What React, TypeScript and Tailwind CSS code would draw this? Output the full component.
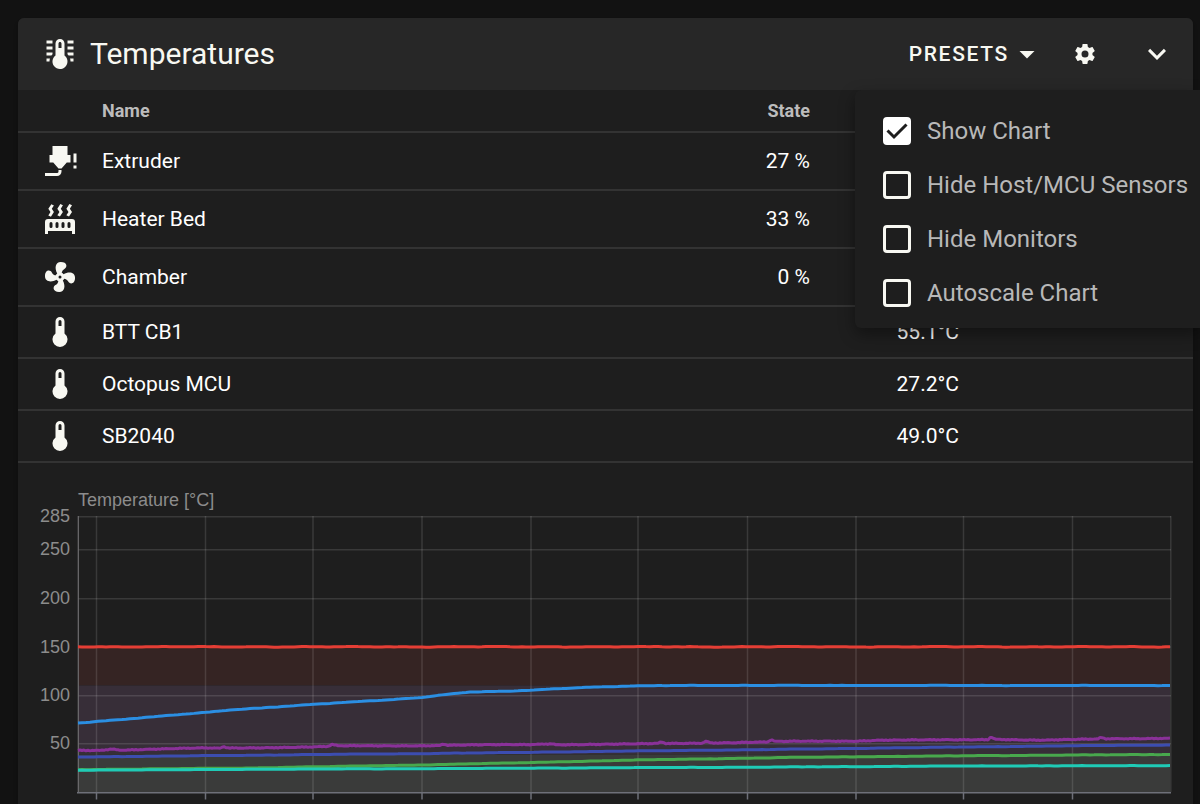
import type { ReactNode } from "react";

const ICONS = {
  lines:
    "M17 3H21V5H17V3M17 7H21V9H17V7M17 11H21V13H17.75L17 12.1V11M21 15V17H19C19 16.31 18.9 15.63 18.71 15H21M7 3V5H3V3H7M7 7V9H3V7H7M7 11V12.1L6.25 13H3V11H7M3 15H5.29C5.1 15.63 5 16.31 5 17H3V15M15 13V5C15 3.34 13.66 2 12 2S9 3.34 9 5V13C6.79 14.66 6.34 17.79 8 20S12.79 22.66 15 21 17.66 16.21 16 14C15.72 13.62 15.38 13.28 15 13M12 4C12.55 4 13 4.45 13 5V8H11V5C11 4.45 11.45 4 12 4Z",
  nozzle:
    "M7 2H17V8H19V13H16.5L13 17H11L7.5 13H5V8H7V2M10 22H2V20H10A1 1 0 0 0 11 19V18H13V19A3 3 0 0 1 10 22M21 7H23V13H21V7M21 15H23V17H21V15Z",
  radiator:
    "M7.95,3L6.53,5.19L7.95,7.4H7.94L5.95,10.5L4.22,9.6L5.64,7.39L4.22,5.19L6.22,2.09L7.95,3M13.95,2.89L12.53,5.1L13.95,7.3L13.94,7.31L11.95,10.4L10.22,9.5L11.64,7.3L10.22,5.1L12.22,2L13.95,2.89M20,2.89L18.56,5.1L20,7.3V7.31L18,10.4L16.25,9.5L17.67,7.3L16.25,5.1L18.25,2L20,2.89M2,22V14A2,2 0 0,1 4,12H20A2,2 0 0,1 22,14V22H20V20H4V22H2M6,14A1,1 0 0,0 5,15V17A1,1 0 0,0 6,18A1,1 0 0,0 7,17V15A1,1 0 0,0 6,14M10,14A1,1 0 0,0 9,15V17A1,1 0 0,0 10,18A1,1 0 0,0 11,17V15A1,1 0 0,0 10,14M14,14A1,1 0 0,0 13,15V17A1,1 0 0,0 14,18A1,1 0 0,0 15,17V15A1,1 0 0,0 14,14M18,14A1,1 0 0,0 17,15V17A1,1 0 0,0 18,18A1,1 0 0,0 19,17V15A1,1 0 0,0 18,14Z",
  fan: "M12,11A1,1 0 0,0 11,12A1,1 0 0,0 12,13A1,1 0 0,0 13,12A1,1 0 0,0 12,11M12.5,2C17,2 17.11,5.57 14.75,6.75C13.76,7.24 13.32,8.29 13.13,9.22C13.61,9.42 14.03,9.73 14.35,10.13C18.05,8.13 22.03,8.92 22.03,12.5C22.03,17 18.46,17.1 17.28,14.73C16.78,13.74 15.72,13.3 14.79,13.11C14.59,13.59 14.28,14 13.88,14.34C15.87,18.03 15.08,22 11.5,22C7,22 6.91,18.42 9.27,17.24C10.25,16.75 10.69,15.71 10.89,14.79C10.4,14.59 9.97,14.27 9.65,13.87C5.96,15.85 2,15.07 2,11.5C2,7 5.56,6.89 6.74,9.26C7.24,10.25 8.29,10.68 9.22,10.87C9.41,10.39 9.73,9.97 10.14,9.65C8.15,5.96 8.94,2 12.5,2Z",
  thermometer:
    "M15 13V5A3 3 0 0 0 9 5V13A5 5 0 1 0 15 13M12 4A1 1 0 0 1 13 5V8H11V5A1 1 0 0 1 12 4Z",
  menuDown: "M7,10L12,15L17,10H7Z",
  chevron: "M7.41,8.58L12,13.17L16.59,8.58L18,10L12,16L6,10L7.41,8.58Z",
  cog: "M12,15.5A3.5,3.5 0 0,1 8.5,12A3.5,3.5 0 0,1 12,8.5A3.5,3.5 0 0,1 15.5,12A3.5,3.5 0 0,1 12,15.5M19.43,12.97C19.47,12.65 19.5,12.33 19.5,12C19.5,11.67 19.47,11.34 19.43,11L21.54,9.37C21.73,9.22 21.78,8.95 21.66,8.73L19.66,5.27C19.54,5.05 19.27,4.96 19.05,5.05L16.56,6.05C16.04,5.66 15.5,5.32 14.87,5.07L14.5,2.42C14.46,2.18 14.25,2 14,2H10C9.75,2 9.54,2.18 9.5,2.42L9.13,5.07C8.5,5.32 7.96,5.66 7.44,6.05L4.95,5.05C4.73,4.96 4.46,5.05 4.34,5.27L2.34,8.73C2.21,8.95 2.27,9.22 2.46,9.37L4.57,11C4.53,11.34 4.5,11.67 4.5,12C4.5,12.33 4.53,12.65 4.57,12.97L2.46,14.63C2.27,14.78 2.21,15.05 2.34,15.27L4.34,18.73C4.46,18.95 4.73,19.03 4.95,18.95L7.44,17.94C7.96,18.34 8.5,18.68 9.13,18.93L9.5,21.58C9.54,21.82 9.75,22 10,22H14C14.25,22 14.46,21.82 14.5,21.58L14.87,18.93C15.5,18.67 16.04,18.34 16.56,17.94L19.05,18.95C19.27,19.03 19.54,18.95 19.66,18.73L21.66,15.27C21.78,15.05 21.73,14.78 21.54,14.63L19.43,12.97Z",
};

function Icon({ name, className = "size-9" }: { name: keyof typeof ICONS; className?: string }) {
  return (
    <svg viewBox="0 0 24 24" className={`block shrink-0 fill-[#f8f8f2] ${className}`} aria-hidden="true">
      <path d={ICONS[name]} />
    </svg>
  );
}

type Sensor = { icon: keyof typeof ICONS; name: string; state?: string; temp?: string; tall?: boolean };

const SENSORS: Sensor[] = [
  { icon: "nozzle", name: "Extruder", state: "27 %", tall: true },
  { icon: "radiator", name: "Heater Bed", state: "33 %", tall: true },
  { icon: "fan", name: "Chamber", state: "0 %", tall: true },
  { icon: "thermometer", name: "BTT CB1", temp: "55.1°C" },
  { icon: "thermometer", name: "Octopus MCU", temp: "27.2°C" },
  { icon: "thermometer", name: "SB2040", temp: "49.0°C" },
];

const OPTIONS = [
  { label: "Show Chart", checked: true },
  { label: "Hide Host/MCU Sensors", checked: false },
  { label: "Hide Monitors", checked: false },
  { label: "Autoscale Chart", checked: false },
];

type Point = [number, number];

// Linear interpolation through the sampled points, with sensor jitter on top.
function trace(points: Point[], jitter: number, step: number): string {
  const out: string[] = [];
  let seg = 0;
  for (let x = points[0][0]; x <= points[points.length - 1][0]; x += step) {
    while (seg < points.length - 2 && x > points[seg + 1][0]) seg++;
    const [x0, y0] = points[seg];
    const [x1, y1] = points[seg + 1];
    const noise = jitter * (Math.sin(x * 1.7) * 0.5 + Math.sin(x * 0.37) * 0.3 + Math.sin(x * 3.1) * 0.4);
    out.push(`${x},${(y0 + ((y1 - y0) * (x - x0)) / (x1 - x0) + noise).toFixed(2)}`);
  }
  return out.join(" ");
}

const SERIES: { color: string; points: Point[]; jitter: number; step: number }[] = [
  { color: "#2b8fe3", jitter: 0.15, step: 4, points: [[78, 723], [205, 712.5], [230, 710], [312, 704.5], [400, 699], [421, 697.5], [445, 694.5], [470, 692], [510, 691.2], [580, 687.5], [638, 685.9], [680, 685.4], [1170, 685.5]] },
  { color: "#e53e35", jitter: 0.35, step: 4, points: [[78, 646.8], [1170, 646.8]] },
  { color: "#48a84d", jitter: 0.15, step: 4, points: [[78, 769.6], [250, 768], [312, 766.8], [421, 765], [530, 762.5], [638, 760], [747, 758.2], [800, 757.3], [963, 755.8], [1170, 754.4]] },
  { color: "#8a3199", jitter: 0.6, step: 2, points: [[78, 750.4], [100, 750.2], [112, 748.8], [120, 750], [205, 748], [220, 748.4], [223, 746.4], [228, 748], [312, 747], [328, 746.6], [332, 744.6], [338, 746], [421, 745.6], [440, 745.4], [443, 743.6], [447, 745.2], [530, 744.6], [552, 743.6], [556, 744.6], [638, 744], [658, 743.6], [661, 742], [666, 743.6], [702, 743], [706, 741], [711, 742.8], [768, 742], [771, 739.6], [775, 741.6], [856, 741], [880, 740], [960, 740], [988, 739.6], [991, 736.6], [995, 739.2], [1040, 740], [1098, 739.2], [1101, 737.4], [1105, 739], [1140, 738.6], [1170, 738]] },
  { color: "#3c4db0", jitter: 0.15, step: 4, points: [[78, 757], [312, 754.6], [421, 753.6], [530, 752.3], [638, 751], [747, 749.8], [856, 748.4], [963, 747], [1072, 745.8], [1170, 745]] },
  { color: "#1fcbb6", jitter: 0.15, step: 4, points: [[78, 770.2], [312, 769], [421, 768.7], [530, 768.2], [638, 767.6], [747, 767.2], [856, 766.6], [963, 766], [1170, 765.6]] },
];

const TIME_TICKS = [96, 205, 312.5, 421.5, 530.5, 637.5, 747, 855.5, 963, 1072];
const TEMP_TICKS = [
  { value: 285, y: 516.7 },
  { value: 250, y: 549.7 },
  { value: 200, y: 598.7 },
  { value: 150, y: 647 },
  { value: 100, y: 695.7 },
  { value: 50, y: 743.7 },
];

function Chart() {
  return (
    <svg viewBox="18 463 1175 341" className="block w-full" role="img" aria-label="Temperature chart">
      <g fontFamily="'Liberation Sans', Arial, sans-serif" fontSize="18" fill="#8c8c8c">
        <text x="78" y="506">Temperature [°C]</text>
        {TEMP_TICKS.map((t) => (
          <text key={t.value} x="70" y={t.y + 5.5} textAnchor="end">{t.value}</text>
        ))}
      </g>
      <rect x="78" y="647" width="1092" height="38.5" fill="#352423" />
      <rect x="78" y="685.5" width="1092" height="69" fill="#372e38" />
      <rect x="78" y="754.5" width="1092" height="38" fill="#3a3b3a" />
      <g stroke="#ffffff" strokeOpacity="0.12" strokeWidth="1.5">
        {TEMP_TICKS.map((t) => (
          <line key={t.value} x1="78" x2="1171" y1={t.y} y2={t.y} />
        ))}
        {TIME_TICKS.map((x) => (
          <line key={x} x1={x + 0.5} x2={x + 0.5} y1="516" y2="792" />
        ))}
        <line x1="1170.8" x2="1170.8" y1="516" y2="792" />
      </g>
      <line x1="78.3" x2="78.3" y1="516" y2="792" stroke="#6f6e70" strokeWidth="1.2" />
      <g stroke="#6e7079" strokeWidth="1.5">
        <line x1="77" x2="1171" y1="792.8" y2="792.8" />
        {TIME_TICKS.map((x) => (
          <line key={x} x1={x + 0.5} x2={x + 0.5} y1="793" y2="799.5" />
        ))}
      </g>
      {SERIES.map((s) => (
        <polyline
          key={s.color}
          points={trace(s.points, s.jitter, s.step)}
          fill="none"
          stroke={s.color}
          strokeWidth="3"
          strokeLinejoin="bevel"
        />
      ))}
    </svg>
  );
}

function HeaderButton({ label, children }: { label: string; children: ReactNode }) {
  return (
    <button type="button" aria-label={label} className="flex size-[72px] items-center justify-center">
      {children}
    </button>
  );
}

export default function App() {
  return (
    <div className="relative min-h-screen overflow-hidden bg-[#121212] pt-[18px] pr-[7px] pl-[18px] font-['Roboto',sans-serif] text-white">
      <section className="rounded-t-md bg-[#1e1e1e] shadow-md">
        <header className="flex h-[72px] items-center rounded-t-md bg-[#272727] pl-6 text-[#f8f8f2]">
          <Icon name="lines" />
          <h1 className="ml-3 flex-1 text-[30px] leading-9">Temperatures</h1>
          <button type="button" className="mr-1 flex items-center text-[21px] leading-9 font-medium tracking-[0.08em]">
            PRESETS
            <Icon name="menuDown" />
          </button>
          <HeaderButton label="Settings">
            <Icon name="cog" className="size-6" />
          </HeaderButton>
          <HeaderButton label="Collapse">
            <Icon name="chevron" />
          </HeaderButton>
        </header>

        <table className="w-full table-fixed border-collapse text-[21px] leading-7">
          <colgroup>
            <col className="w-[84px]" />
            <col />
            <col className="w-[150px]" />
            <col className="w-[149px]" />
            <col className="w-[234px]" />
          </colgroup>
          <thead>
            <tr className="h-[42px] border-b-2 border-[#333333] text-[18px] text-[#bcbcbc]">
              <th />
              <th className="text-left font-bold">Name</th>
              <th className="text-right font-bold">State</th>
              <th />
              <th />
            </tr>
          </thead>
          <tbody>
            {SENSORS.map((s) => (
              <tr key={s.name} className={`border-b-2 border-[#333333] ${s.tall ? "h-[58px]" : "h-[52px]"}`}>
                <td className="pl-6">
                  <Icon name={s.icon} />
                </td>
                <td>{s.name}</td>
                <td className="text-right">{s.state}</td>
                <td className="text-right">{s.temp}</td>
                <td />
              </tr>
            ))}
          </tbody>
        </table>

        <Chart />
      </section>

      <div className="absolute top-[90px] right-0 w-[345px] rounded-l-md bg-[#1e1e1e] pt-[14px] pb-2 pl-7 shadow-[0_6px_16px_rgba(0,0,0,0.4)]">
        {OPTIONS.map((o) => (
          <label key={o.label} className="flex h-[54px] items-center gap-4 text-2xl whitespace-nowrap text-[#b8b8b8]">
            <span className="relative flex size-7 shrink-0">
              <input
                type="checkbox"
                defaultChecked={o.checked}
                className="peer size-7 appearance-none rounded-[4px] border-3 border-[#f8f8f2] checked:border-white checked:bg-white"
              />
              <svg
                viewBox="0 0 28 28"
                className="pointer-events-none absolute inset-0 hidden size-7 peer-checked:block"
                fill="none"
                stroke="#1e1e1e"
                strokeWidth="3"
                aria-hidden="true"
              >
                <path d="M4.5 13.5L11 20L23.5 7.5" />
              </svg>
            </span>
            {o.label}
          </label>
        ))}
      </div>
    </div>
  );
}
